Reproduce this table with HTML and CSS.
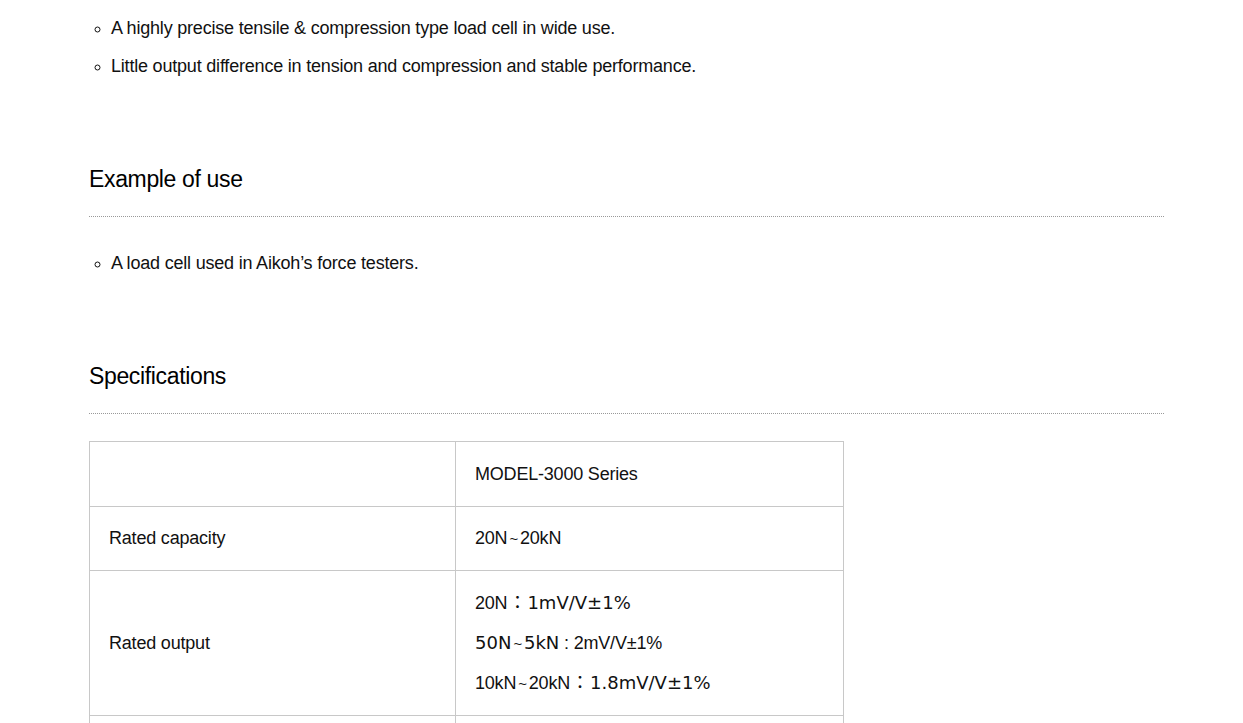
FILE: index.html
```html
<!DOCTYPE html>
<html>
<head>
<meta charset="utf-8">
<link rel="stylesheet" href="styles.css">
</head>
<body>
<div class="page">
  <ul class="list first">
    <li>A highly precise tensile &amp; compression type load cell in wide use.</li>
    <li>Little output difference in tension and compression and stable performance.</li>
  </ul>

  <h2 class="heading">Example of use</h2>
  <ul class="list">
    <li>A load cell used in Aikoh’s force testers.</li>
  </ul>

  <h2 class="heading">Specifications</h2>
  <table class="spec">
    <tr class="r1">
      <td class="c1"></td>
      <td class="c2">MODEL-3000 Series</td>
    </tr>
    <tr class="r2">
      <td class="c1">Rated capacity</td>
      <td class="c2">20N<span class="tilde">~</span>20kN</td>
    </tr>
    <tr class="r3">
      <td class="c1">Rated output</td>
      <td class="c2">
        <p class="ln">20N<span class="fw">：</span><span class="wd">1mV/V±1%</span></p>
        <p class="ln"><span class="wd">50N</span><span class="tilde">~</span><span class="wd">5kN</span> : 2mV/V±1%</p>
        <p class="ln">10kN<span class="tilde">~</span>20kN<span class="fw">：</span><span class="wd">1.8mV/V±1%</span></p>
      </td>
    </tr>
    <tr class="r4">
      <td class="c1"></td>
      <td class="c2"></td>
    </tr>
  </table>
</div>
</body>
</html>
```

FILE: styles.css
```css
html, body {
  margin: 0;
  padding: 0;
  background: #fff;
}
body {
  font-family: "Liberation Sans", Arial, sans-serif;
  color: #111;
  font-size: 18px;
  letter-spacing: -0.2px;
}
.page {
  width: 1075px;
  margin-left: 89px;
  padding-top: 16px;
}
.list {
  list-style: circle;
  margin: 0;
  padding-left: 22px;
}
.list li {
  line-height: 24px;
  margin-bottom: 14px;
}
.list li::marker {
  font-size: 15px;
}
.heading {
  font-weight: normal;
  font-size: 23px;
  margin: 86px 0 0 0;
  line-height: 30px;
  padding-bottom: 22px;
  border-bottom: 1px dotted #999;
  color: #000;
  letter-spacing: -0.35px;
}
.heading + .list {
  margin-top: 34px;
}
.spec {
  margin-top: 27px;
  border-collapse: collapse;
  width: 755px;
}
.spec td {
  border: 1px solid #c8c8c8;
  padding: 0 19px;
  vertical-align: middle;
}
.spec .c1 { width: 327px; }
.spec .r1 td { height: 64px; }
.spec .r2 td { height: 63px; }
.spec .r3 td { height: 144px; }
.spec .r4 td { height: 30px; }
.tilde {
  font-size: 15px;
  margin: 0 2px;
}
.fw {
  font-family: "Noto Sans CJK JP", sans-serif;
  line-height: 1;
  letter-spacing: 0;
  margin: 0 1px;
}
.wd {
  font-family: "DejaVu Sans", sans-serif;
  font-size: 18px;
  letter-spacing: 0;
  line-height: 1;
}
.ln {
  margin: 0;
  height: 24px;
  line-height: 24px;
  padding: 8px 0;
}
```
